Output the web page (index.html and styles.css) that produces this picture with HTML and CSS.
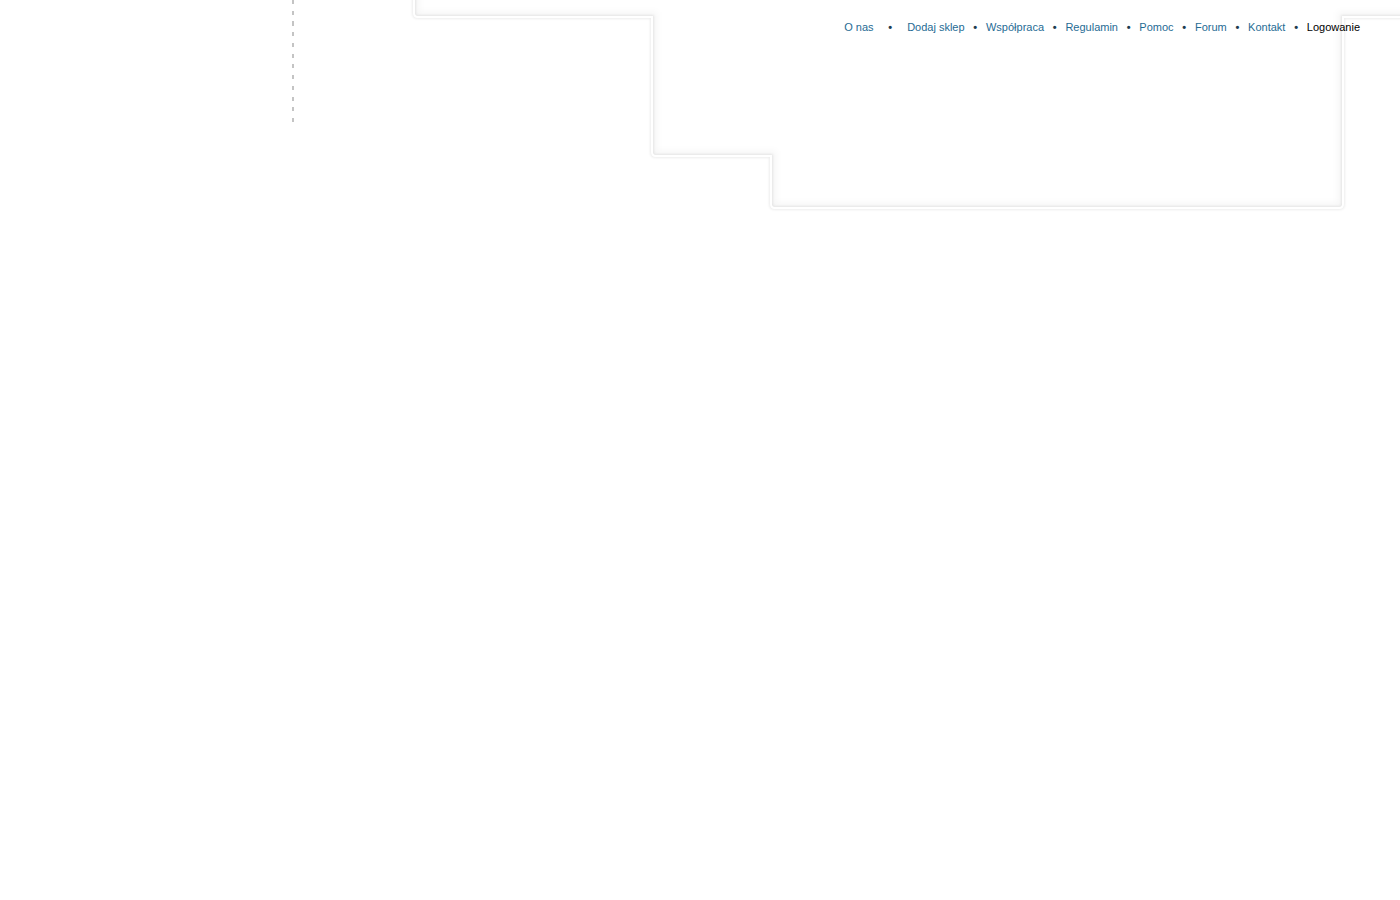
FILE: index.html
```html
<!DOCTYPE html>
<html lang="pl">
<head>
<meta charset="utf-8">
<title>Logowanie</title>
<link rel="stylesheet" href="styles.css">
</head>
<body>
<header class="header">
  <svg class="frame" width="1400" height="230" viewBox="0 0 1400 230" aria-hidden="true">
    <defs>
      <clipPath id="inside">
        <path d="M414,-10 V13 Q414,17 418,17 H652 V152 Q652,156 656,156 H771 V204 Q771,208 775,208 H1339 Q1343,208 1343,204 V17 H1410 V-10 Z"/>
      </clipPath>
      <filter id="soft" x="-5%" y="-20%" width="110%" height="140%">
        <feGaussianBlur stdDeviation="3"/>
      </filter>
      <filter id="halo" x="-5%" y="-20%" width="110%" height="140%">
        <feGaussianBlur stdDeviation="1"/>
      </filter>
    </defs>
    <path class="outer" filter="url(#halo)" d="M414,-10 V13 Q414,17 418,17 H652 V152 Q652,156 656,156 H771 V204 Q771,208 775,208 H1339 Q1343,208 1343,204 V17 H1410"/>
    <g clip-path="url(#inside)">
      <path class="inner" filter="url(#soft)" d="M414,-10 V13 Q414,17 418,17 H652 V152 Q652,156 656,156 H771 V204 Q771,208 775,208 H1339 Q1343,208 1343,204 V17 H1410"/>
    </g>
    <path class="line" d="M414,-10 V13 Q414,17 418,17 H652 V152 Q652,156 656,156 H771 V204 Q771,208 775,208 H1339 Q1343,208 1343,204 V17 H1410"/>
  </svg>
  <div class="rule"></div>
  <nav class="nav">
    <a class="link first" href="#">O nas</a>
    <span class="dot first-dot">•</span>
    <a class="link" href="#">Dodaj sklep</a>
    <span class="dot">•</span>
    <a class="link" href="#">Współpraca</a>
    <span class="dot">•</span>
    <a class="link" href="#">Regulamin</a>
    <span class="dot">•</span>
    <a class="link" href="#">Pomoc</a>
    <span class="dot">•</span>
    <a class="link" href="#">Forum</a>
    <span class="dot">•</span>
    <a class="link" href="#">Kontakt</a>
    <span class="dot">•</span>
    <a class="link current" href="#">Logowanie</a>
  </nav>
</header>
</body>
</html>
```

FILE: styles.css
```css
html, body {
  margin: 0;
  padding: 0;
  background: #ffffff;
}

body {
  font-family: "Liberation Sans", Arial, sans-serif;
  width: 1400px;
  height: 900px;
  overflow: hidden;
}

.header {
  position: relative;
  display: flex;
  align-items: flex-start;
  height: 230px;
}

.frame {
  position: absolute;
  top: 0;
  left: 0;
  z-index: 0;
}

.frame .outer {
  fill: none;
  stroke: rgba(0, 0, 0, 0.07);
  stroke-width: 4;
}

.frame .inner {
  fill: none;
  stroke: rgba(0, 0, 0, 0.035);
  stroke-width: 10;
}

.frame .line {
  fill: none;
  stroke: #ffffff;
  stroke-width: 2;
}

.rule {
  position: relative;
  z-index: 1;
  margin-left: 292px;
  width: 2px;
  height: 122px;
  background: repeating-linear-gradient(to bottom, #c4c4c4 0, #c4c4c4 4px, transparent 4px, transparent 10.75px);
}

.nav {
  position: relative;
  z-index: 1;
  margin-left: auto;
  padding: 21px 40px 0 0;
  display: flex;
  align-items: baseline;
  font-size: 11px;
  line-height: 13px;
}

.link {
  color: #1f6b94;
  text-decoration: none;
}

.link.current {
  color: #000000;
}

.dot {
  color: #1d3c50;
  font-weight: bold;
  margin: 0 8.75px 0 8.75px;
}

.first {
  margin-right: 6px;
}

.first-dot {
  margin-right: 15px;
}
```
